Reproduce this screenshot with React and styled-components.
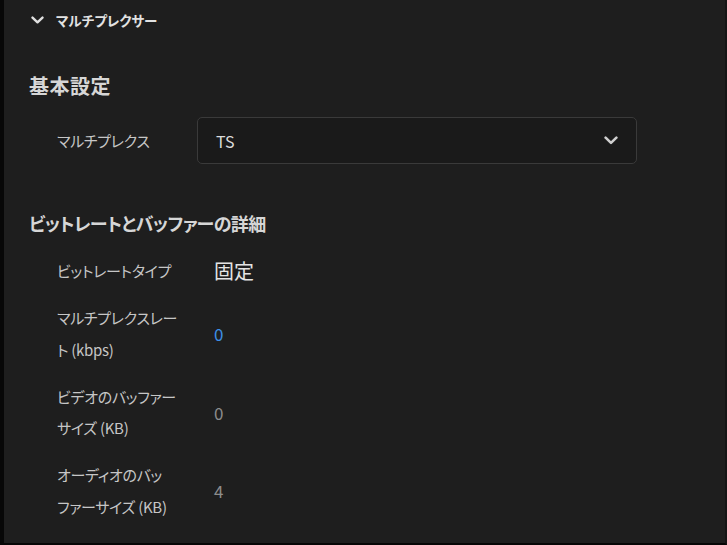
import styled, { createGlobalStyle } from 'styled-components';

const GlobalStyle = createGlobalStyle`
  html, body {
    margin: 0;
    padding: 0;
    background: #0c0c0c;
  }

  body {
    font-family: 'Noto Sans CJK JP', 'Noto Sans', sans-serif;
    font-feature-settings: 'palt';
  }
`;

const Frame = styled.div`
  width: 727px;
  height: 545px;
  display: flex;
  flex-direction: column;
  overflow: hidden;
  border-left: 4px solid #070707;
  box-sizing: border-box;
`;

const Panel = styled.main`
  flex: 1;
  display: flex;
  flex-direction: column;
  background: #1e1e1e;
  border-right: 2px solid #151515;
  border-bottom: 2px solid #060606;
`;

const SectionToggle = styled.button`
  height: 40px;
  display: flex;
  align-items: center;
  gap: 12px;
  padding: 0 0 0 27px;
  border: none;
  background: none;
  color: #e2e2e2;
  font-family: inherit;
  font-feature-settings: 'palt';
  font-size: 13.5px;
  font-weight: 700;
  cursor: pointer;
`;

const Body = styled.div`
  display: flex;
  flex-direction: column;
  padding: 32px 0 0 25px;
`;

const GroupTitle = styled.h3`
  margin: ${({ $top }) => $top || 0}px 0 0;
  font-size: ${({ $size }) => $size || 18}px;
  letter-spacing: ${({ $spacing }) => $spacing || 0}px;
  line-height: 28px;
  font-weight: 700;
  color: #d6d6d6;
`;

const FieldList = styled.div`
  display: flex;
  flex-direction: column;
  gap: ${({ $gap }) => $gap || 16}px;
  margin-top: ${({ $top }) => $top || 0}px;
  padding-left: 28px;
`;

const Field = styled.div`
  display: grid;
  grid-template-columns: 140px 1fr;
  align-items: center;
`;

const Label = styled.div`
  color: #c6c6c6;
  font-size: 15px;
  line-height: 31.5px;
  letter-spacing: -0.3px;
`;

const Value = styled.div`
  padding-left: 17px;
  font-size: ${({ $large }) => ($large ? 20 : 17)}px;
  color: ${({ $tone }) =>
    $tone === 'link' ? '#3d8fe6' : $tone === 'muted' ? '#8c8c8c' : '#e4e4e4'};
`;

const Select = styled.button`
  width: 440px;
  height: 47px;
  display: flex;
  align-items: center;
  justify-content: space-between;
  padding: 0 18px;
  box-sizing: border-box;
  background: #1a1a1a;
  border: 1px solid #3a3a3a;
  border-radius: 5px;
  color: #dcdcdc;
  font-family: inherit;
  font-size: 16px;
  cursor: pointer;
`;

const Chevron = ({ size = 12, color = '#dcdcdc' }) => (
  <svg width={size} height={size * 0.62} viewBox="0 0 13 8" fill="none">
    <path
      d="M1.5 1.5 6.5 6.3 11.5 1.5"
      stroke={color}
      strokeWidth="2.4"
      strokeLinecap="round"
      strokeLinejoin="round"
    />
  </svg>
);

const bufferFields = [
  { label: ['ビットレートタイプ'], value: '固定', large: true },
  { label: ['マルチプレクスレー', 'ト (kbps)'], value: '0', tone: 'link' },
  { label: ['ビデオのバッファー', 'サイズ (KB)'], value: '0', tone: 'muted' },
  { label: ['オーディオのバッ', 'ファーサイズ (KB)'], value: '4', tone: 'muted' },
];

function App() {
  return (
    <Frame>
      <GlobalStyle />
      <Panel>
        <SectionToggle>
          <Chevron size={13} color="#e0e0e0" />
          マルチプレクサー
        </SectionToggle>

        <Body>
          <GroupTitle $size={20} $spacing={0.5}>
            基本設定
          </GroupTitle>
          <FieldList $top={17}>
            <Field>
              <Label>マルチプレクス</Label>
              <Select>
                TS
                <Chevron size={14} color="#cfcfcf" />
              </Select>
            </Field>
          </FieldList>

          <GroupTitle $top={45} $spacing={-0.6}>
            ビットレートとバッファーの詳細
          </GroupTitle>
          <FieldList $top={18} $gap={15.5}>
            {bufferFields.map((field) => (
              <Field key={field.label.join('')}>
                <Label>
                  {field.label.map((line) => (
                    <div key={line}>{line}</div>
                  ))}
                </Label>
                <Value $tone={field.tone} $large={field.large}>
                  {field.value}
                </Value>
              </Field>
            ))}
          </FieldList>
        </Body>
      </Panel>
    </Frame>
  );
}

export default App;
